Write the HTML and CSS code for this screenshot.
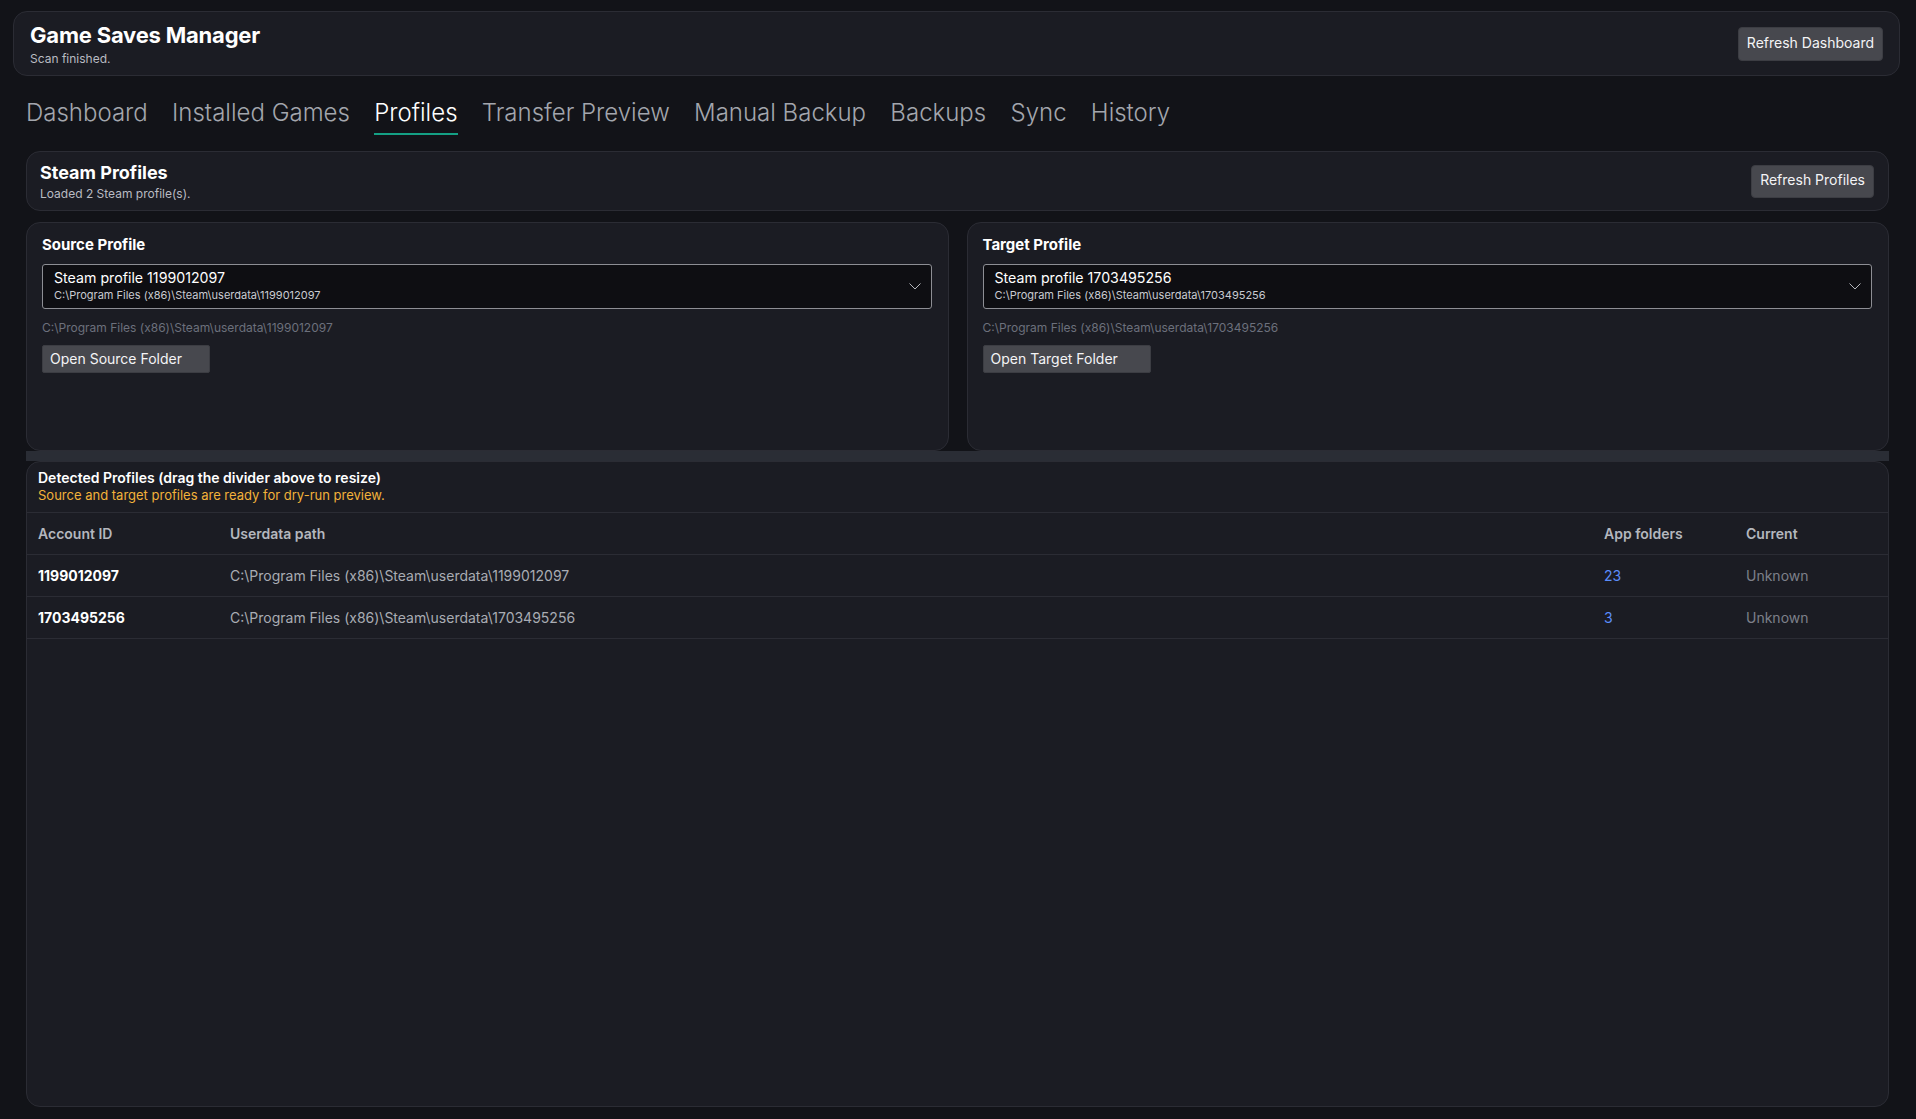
FILE: index.html
```html
<!DOCTYPE html>
<html lang="en">
<head>
<meta charset="utf-8">
<title>Game Saves Manager</title>
<link rel="stylesheet" href="styles.css">
</head>
<body>
<div class="app">
  <header class="header">
    <div class="header-text">
      <h1 class="app-title">Game Saves Manager</h1>
      <div class="app-status">Scan finished.</div>
    </div>
    <button class="btn btn-lg">Refresh Dashboard</button>
  </header>

  <div class="main">
    <nav class="tabs">
      <span class="tab">Dashboard</span>
      <span class="tab">Installed Games</span>
      <span class="tab active">Profiles</span>
      <span class="tab">Transfer Preview</span>
      <span class="tab">Manual Backup</span>
      <span class="tab">Backups</span>
      <span class="tab">Sync</span>
      <span class="tab">History</span>
    </nav>

    <section class="card section-head">
      <div>
        <h2 class="section-title">Steam Profiles</h2>
        <div class="section-sub">Loaded 2 Steam profile(s).</div>
      </div>
      <button class="btn btn-lg">Refresh Profiles</button>
    </section>

    <div class="pickers">
      <section class="card picker">
        <h3 class="picker-label">Source Profile</h3>
        <div class="select">
          <div class="select-main">Steam profile 1199012097</div>
          <div class="select-sub">C:\Program Files (x86)\Steam\userdata\1199012097</div>
          <svg class="chevron" width="12" height="7" viewBox="0 0 12 7"><path d="M0.5 0.5 L6 6 L11.5 0.5" fill="none" stroke="#b4b6bc" stroke-width="1"/></svg>
        </div>
        <div class="picker-path">C:\Program Files (x86)\Steam\userdata\1199012097</div>
        <button class="btn btn-folder">Open Source Folder</button>
      </section>
      <section class="card picker">
        <h3 class="picker-label">Target Profile</h3>
        <div class="select">
          <div class="select-main">Steam profile 1703495256</div>
          <div class="select-sub">C:\Program Files (x86)\Steam\userdata\1703495256</div>
          <svg class="chevron" width="12" height="7" viewBox="0 0 12 7"><path d="M0.5 0.5 L6 6 L11.5 0.5" fill="none" stroke="#b4b6bc" stroke-width="1"/></svg>
        </div>
        <div class="picker-path">C:\Program Files (x86)\Steam\userdata\1703495256</div>
        <button class="btn btn-folder">Open Target Folder</button>
      </section>
    </div>

    <div class="divider"></div>

    <section class="card detected">
      <div class="detected-head">
        <div class="detected-title">Detected Profiles (drag the divider above to resize)</div>
        <div class="detected-note">Source and target profiles are ready for dry-run preview.</div>
      </div>
      <div class="table">
        <div class="row head">
          <div class="cell">Account ID</div>
          <div class="cell">Userdata path</div>
          <div class="cell">App folders</div>
          <div class="cell">Current</div>
        </div>
        <div class="row">
          <div class="cell id">1199012097</div>
          <div class="cell path">C:\Program Files (x86)\Steam\userdata\1199012097</div>
          <div class="cell num">23</div>
          <div class="cell muted">Unknown</div>
        </div>
        <div class="row">
          <div class="cell id">1703495256</div>
          <div class="cell path">C:\Program Files (x86)\Steam\userdata\1703495256</div>
          <div class="cell num">3</div>
          <div class="cell muted">Unknown</div>
        </div>
      </div>
    </section>
  </div>
</div>
</body>
</html>
```

FILE: styles.css
```css
* { box-sizing: border-box; }

html, body {
  margin: 0;
  padding: 0;
  height: 100%;
}

body {
  background: #121318;
  color: #f1f1f3;
  font-family: Inter, "Noto Sans", "Liberation Sans", sans-serif;
}

h1, h2, h3 { margin: 0; }

.app {
  height: 100vh;
  display: flex;
  flex-direction: column;
  padding: 11px 16px 12px 13px;
}

.card {
  background: #1b1c23;
  border: 1px solid #2b2c34;
  border-radius: 14px;
}

.header {
  height: 65px;
  flex: none;
  display: flex;
  align-items: center;
  justify-content: space-between;
  background: #1b1c23;
  border: 1px solid #2b2c34;
  border-radius: 14px;
  padding: 0 16px 0 16px;
}

.app-title {
  font-size: 22px;
  font-weight: 700;
  line-height: 26px;
  color: #ffffff;
  letter-spacing: -0.2px;
}

.app-status {
  font-size: 12px;
  line-height: 14px;
  color: #b9bbc2;
  margin-top: 4px;
}

.btn {
  font-family: Inter, "Noto Sans", "Liberation Sans", sans-serif;
  background: #47484e;
  color: #f4f4f6;
  border: 1px solid #3c3d43;
  border-radius: 4px;
  font-size: 14px;
  cursor: pointer;
}

.btn-lg {
  height: 34px;
  padding: 0 8px 3px;
}

.main {
  flex: 1;
  min-height: 0;
  display: flex;
  flex-direction: column;
  padding: 0 11px 0 13px;
}

.tabs {
  display: flex;
  gap: 24.3px;
  margin-top: 22px;
  flex: none;
}

.tab {
  font-size: 24px;
  font-weight: 300;
  line-height: 29px;
  color: #a3a6ad;
  padding-bottom: 6px;
  border-bottom: 2px solid transparent;
}

.tab.active {
  color: #ffffff;
  border-bottom-color: #14a084;
}

.section-head {
  margin-top: 16px;
  height: 60px;
  flex: none;
  display: flex;
  align-items: center;
  justify-content: space-between;
  padding: 0 14px 0 13px;
}

.section-head .btn-lg { height: 33px; }

.section-title {
  font-size: 18px;
  font-weight: 700;
  line-height: 22px;
  color: #ffffff;
}

.section-sub {
  font-size: 12px;
  line-height: 15px;
  color: #b9bbc2;
  margin-top: 2px;
}

.pickers {
  margin-top: 11px;
  height: 229px;
  flex: none;
  display: grid;
  grid-template-columns: 1fr 1fr;
  gap: 18px;
}

.picker {
  padding: 12px 16px 0 15px;
}

.picker-label {
  font-size: 15px;
  font-weight: 700;
  line-height: 20px;
  color: #ffffff;
}

.select {
  position: relative;
  margin-top: 9px;
  height: 45px;
  background: #0e0e12;
  border: 1px solid #8d8e94;
  border-radius: 3px;
  padding: 4px 11px 0 11px;
}

.select-main {
  font-size: 14.2px;
  line-height: 17px;
  color: #ffffff;
}

.select-sub {
  font-size: 11px;
  line-height: 15px;
  color: #c9cbd1;
  margin-top: 2px;
}

.chevron {
  position: absolute;
  right: 10px;
  top: 18px;
}

.picker-path {
  margin-top: 11px;
  font-size: 12px;
  line-height: 15px;
  color: #6c707c;
}

.btn-folder {
  display: block;
  margin-top: 10px;
  width: 168px;
  height: 28px;
  text-align: left;
  padding: 0 7px 1px;
  border-radius: 2px;
  font-size: 14px;
}

.divider {
  height: 10px;
  flex: none;
  background: #2a2d35;
}

.detected {
  flex: 1;
  min-height: 0;
}

.detected-head {
  padding: 7px 11px 8px 11px;
  border-bottom: 1px solid #2b2c34;
}

.detected-title {
  font-size: 14px;
  font-weight: 600;
  line-height: 18px;
  color: #ffffff;
}

.detected-note {
  font-size: 13px;
  line-height: 17px;
  color: #f2b23a;
}

.row {
  display: grid;
  grid-template-columns: 192px 1fr 142px 153px;
  height: 42px;
  align-items: center;
  border-bottom: 1px solid #2b2c34;
}

.cell {
  padding-left: 11px;
  font-size: 14px;
  color: #a9acb3;
}

.row.head .cell {
  font-weight: 600;
  color: #b4b7be;
}

.cell.id {
  font-weight: 700;
  color: #ffffff;
}

.cell.path { color: #a9acb3; }

.cell.num { color: #5b8dfb; }

.cell.muted { color: #7d808a; }
```
